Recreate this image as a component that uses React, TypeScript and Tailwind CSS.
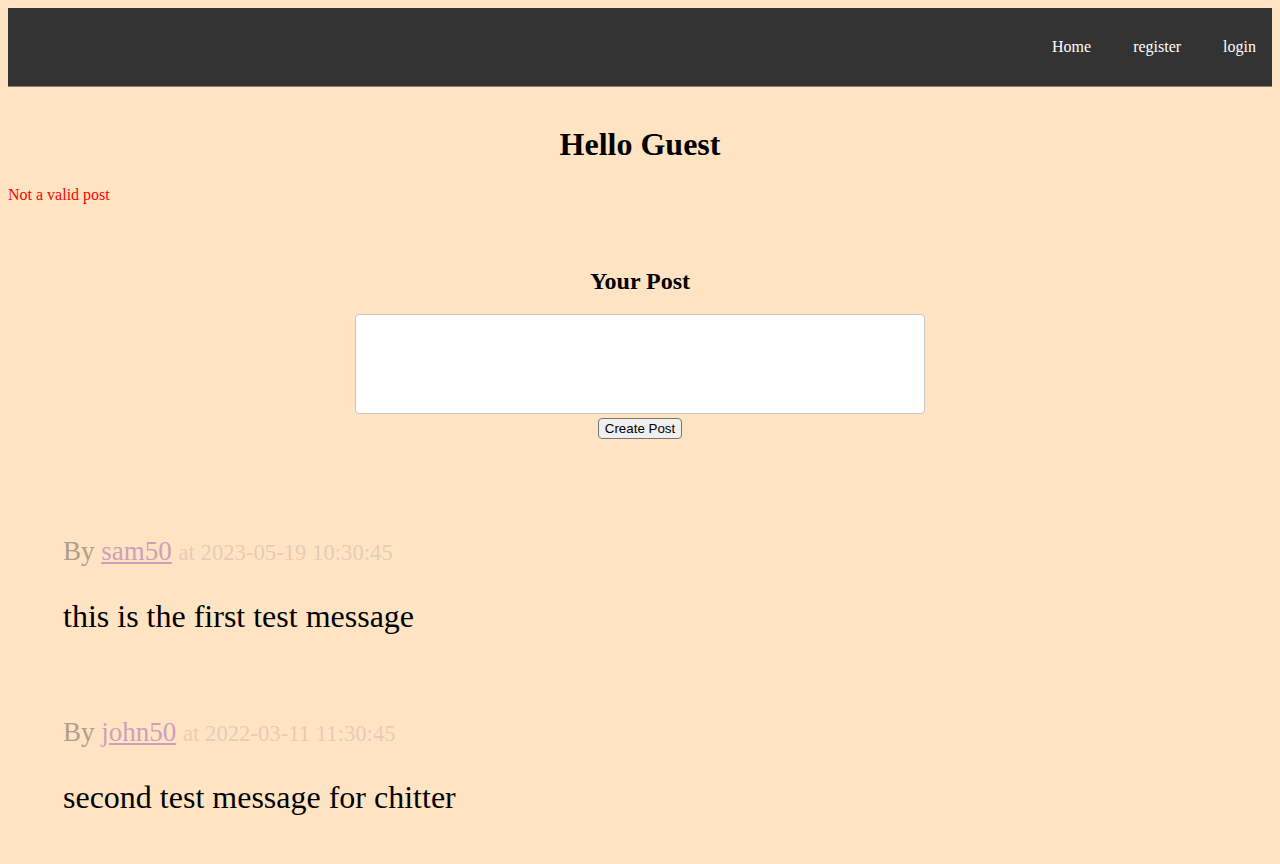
const posts = [
  { user: "sam50", time: "2023-05-19 10:30:45", text: "this is the first test message" },
  { user: "john50", time: "2022-03-11 11:30:45", text: "second test message for chitter" },
];

export default function App() {
  return (
    <div className="min-h-screen bg-[#ffe4c4] p-2 font-['Liberation_Serif',serif] text-black">
      <nav className="flex h-[78px] items-center justify-end gap-[42px] bg-[#333333] pr-4 text-base text-white shadow-[0_1px_0_#8c8072]">
        <a href="#">Home</a>
        <a href="#">register</a>
        <a href="#">login</a>
      </nav>

      <h1 className="mt-[40px] text-center text-[32px] font-bold leading-[37px]">Hello Guest</h1>
      <p className="mt-[20px] text-base text-[#ff0000]">Not a valid post</p>

      <section className="mt-[60px] flex flex-col items-center">
        <h2 className="text-2xl font-bold leading-7">Your Post</h2>
        <textarea className="mt-[19px] h-[100px] w-[570px] resize-none rounded border border-[#c8c8c8] bg-white" />
        <button className="mt-[4px] rounded-sm border border-[#767676] bg-[#efefef] px-[6px] py-[2px] font-['Liberation_Sans',sans-serif] text-[13.33px] leading-[15px]">
          Create Post
        </button>
      </section>

      <div className="mt-[96px] flex flex-col gap-[80px] px-[55px]">
        {posts.map((p) => (
          <div key={p.user}>
            <p className="text-[27px] leading-8 text-[#b09e8b]">
              By{" "}
              <a href="#" className="text-[#c9a2b9] underline">
                {p.user}
              </a>{" "}
              <span className="text-[22.7px] text-[#e6ccb0]">at {p.time}</span>
            </p>
            <p className="mt-[27px] text-[32px] leading-10">{p.text}</p>
          </div>
        ))}
      </div>
    </div>
  );
}
